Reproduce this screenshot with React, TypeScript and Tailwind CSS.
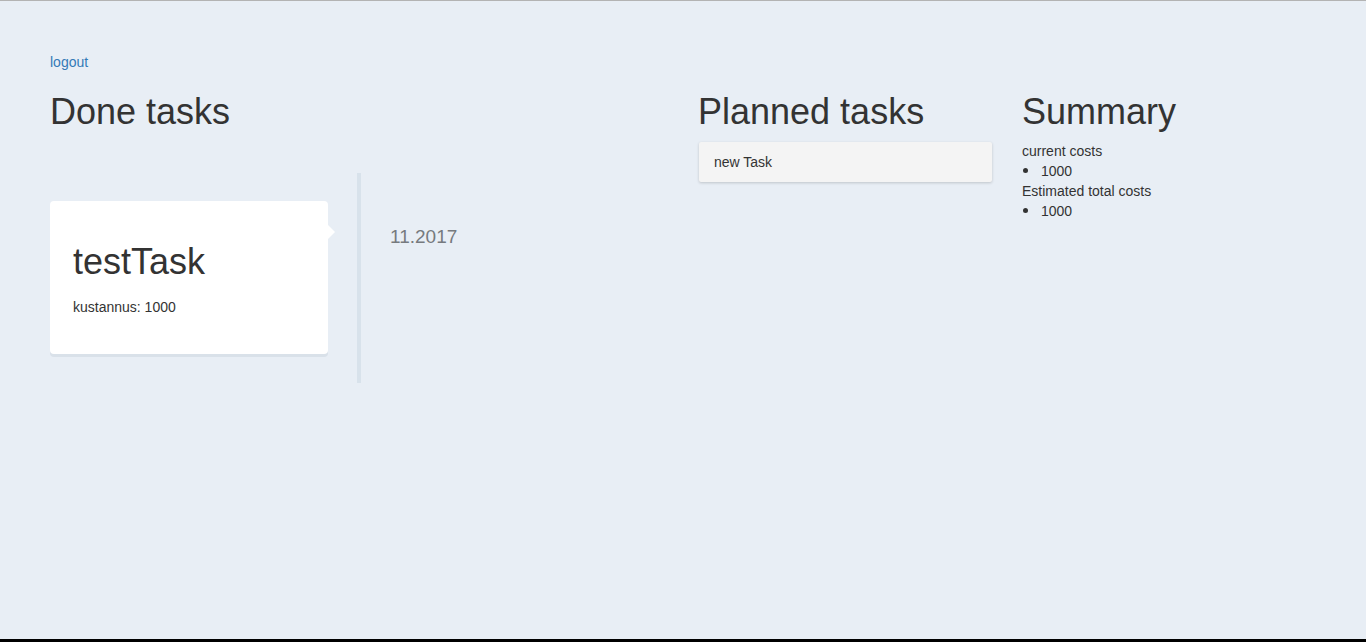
import React from "react";

type DoneTask = { name: string; cost: number; date: string };

const doneTasks: DoneTask[] = [{ name: "testTask", cost: 1000, date: "11.2017" }];
const plannedTasks = ["new Task"];

export default function App() {
  return (
    <div className="h-screen flex flex-col border-t border-[#b3b3b3] border-b-[3px] border-b-black bg-[#e8eef5] text-[#333] font-['Liberation_Sans',Arial,sans-serif] text-[14px] leading-[20px]">
      <main className="flex-1 pl-[50px] pt-[51px]">
        <a href="#" className="text-[#337ab7] block w-fit">
          logout
        </a>

        <div className="flex mt-[20px]">
          {/* Done tasks */}
          <section className="w-[648px]">
            <h1 className="text-[36px] leading-[1.1]">Done tasks</h1>
            <div className="mt-[41px] flex">
              <div className="w-[307px] pt-[28px] pb-[29px]">
                {doneTasks.map((t) => (
                  <div
                    key={t.name}
                    className="relative w-[278px] bg-white rounded-[4px] shadow-[0_3px_0_#d9e1e9] px-[23px] pt-[41px] pb-[37px]"
                  >
                    <span className="absolute left-full top-[24px] w-0 h-0 border-l-[7px] border-l-white border-y-[7px] border-y-transparent" />
                    <h3 className="text-[36px] leading-[40px]">{t.name}</h3>
                    <p className="mt-[15px]">kustannus: {t.cost}</p>
                  </div>
                ))}
              </div>
              <div className="w-[4px] bg-[#d8e2eb]" />
              <div className="pl-[29px] pt-[52px]">
                {doneTasks.map((t) => (
                  <div key={t.date} className="text-[19px] leading-[24px] text-[#767a7e]">
                    {t.date}
                  </div>
                ))}
              </div>
            </div>
          </section>

          {/* Planned tasks */}
          <section className="w-[324px]">
            <h1 className="text-[36px] leading-[1.1] mb-[10px]">Planned tasks</h1>
            {plannedTasks.map((t) => (
              <div
                key={t}
                className="w-[293px] ml-px bg-[#f4f4f4] rounded-[2px] shadow-[0_1px_3px_rgba(0,0,0,0.18)] px-[15px] py-[10px]"
              >
                {t}
              </div>
            ))}
          </section>

          {/* Summary */}
          <section className="w-[324px]">
            <h1 className="text-[36px] leading-[1.1] mb-[9px]">Summary</h1>
            <div>current costs</div>
            <ul>
              <li className="flex items-center">
                <span className="w-[19px] flex pl-[1px]">
                  <span className="w-[5px] h-[5px] rounded-full bg-[#333]" />
                </span>
                1000
              </li>
            </ul>
            <div>Estimated total costs</div>
            <ul>
              <li className="flex items-center">
                <span className="w-[19px] flex pl-[1px]">
                  <span className="w-[5px] h-[5px] rounded-full bg-[#333]" />
                </span>
                1000
              </li>
            </ul>
          </section>
        </div>
      </main>
    </div>
  );
}
